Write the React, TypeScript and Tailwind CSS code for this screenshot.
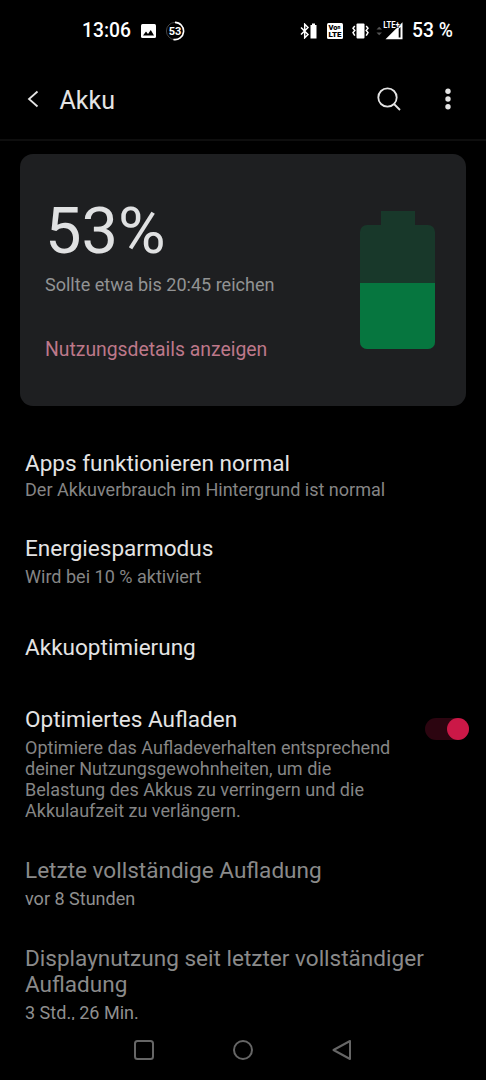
import { ReactNode } from "react";

type SettingProps = {
  title: string;
  text?: string;
  muted?: boolean;
  className?: string;
  textClassName?: string;
  children?: ReactNode;
};

function Setting({ title, text, muted, className, textClassName, children }: SettingProps) {
  return (
    <div className={`flex justify-between ${className ?? ""}`}>
      <div className="w-[402px]">
        <h2
          className={`text-[22.55px] leading-[26.3px] ${
            muted ? "text-[#8a8a8a]" : "text-[#e4e4e4]"
          }`}
        >
          {title}
        </h2>
        {text && (
          <p
            className={`w-[375px] text-[18.05px] leading-[21.2px] ${
              textClassName ?? "mt-[4px] mb-[0.5px]"
            } ${muted ? "text-[#8f8f8f]" : "text-[#858585]"}`}
          >
            {text}
          </p>
        )}
      </div>
      {children}
    </div>
  );
}

function StatusBar() {
  return (
    <div className="flex h-[62px] items-center pl-[82px] pr-[34px] text-white">
      <span className="w-[59px] text-[19.3px] font-medium leading-none">13:06</span>
      <svg className="h-[14px] w-[15px]" viewBox="0 0 15 14">
        <rect width="15" height="14" rx="1.5" fill="#fff" />
        <path d="M2 11.5 5 7.5l2 2.5 2.8-4 3.2 5.5z" fill="#000" />
      </svg>
      <svg className="ml-[9px] h-5 w-5" viewBox="0 0 20 20">
        <circle cx="10" cy="10" r="8.6" fill="none" stroke="#444" strokeWidth="1" />
        <path d="M10 1.4a8.6 8.6 0 1 1-1.6 17.05" fill="none" stroke="#fff" strokeWidth="1.6" />
        <text x="10" y="13.9" textAnchor="middle" fontSize="11" fontWeight="700" fill="#fff">
          53
        </text>
      </svg>

      {/* bluetooth with device battery */}
      <svg className="ml-auto h-4 w-[17px]" viewBox="0 0 17 16">
        <path d="M1 4.5l7 7L4.7 14.8V1.2L8 4.5l-7 7" fill="none" stroke="#fff" strokeWidth="1.5" />
        <path d="M12 .5h3V2h1.5v13.5h-6V2H12z" fill="#fff" />
      </svg>
      <svg className="ml-[10px] h-4 w-4" viewBox="0 0 16 16">
        <rect width="16" height="16" rx="1.5" fill="#fff" />
        <text x="1.5" y="7.3" fontSize="7.5" fontWeight="900" fill="#000">
          Vo<tspan dy="-1.5" fontSize="5">n</tspan>
        </text>
        <text x="1.5" y="14.4" textLength="13" lengthAdjust="spacingAndGlyphs" fontSize="8" fontWeight="900" fill="#000">
          LTE
        </text>
      </svg>
      <svg className="ml-[9px] h-4 w-[17px]" viewBox="0 0 17 16">
        <rect x="4.5" y=".5" width="8" height="15" rx="1" fill="#fff" />
        <path d="M2.8 3 1 5.2l1.8 2.2L1 9.6l1.8 3M14.2 3 16 5.2l-1.8 2.2L16 9.6l-1.8 3" fill="none" stroke="#fff" strokeWidth="1.5" />
      </svg>
      <svg className="ml-[7px] h-[18px] w-[27px] overflow-visible" viewBox="0 0 27 18">
        <path d="M.5 7.5 3.2 4.7 6 7.5zM.5 10.5 3.2 13.3 6 10.5z" fill="#555" />
        <path d="M9.5 17.2 26.5.2v17z" fill="#fff" />
        <path d="M24.5 5v10.5h-1.8V6.8z" fill="#000" />
        <text x="7.2" y="6.3" fontSize="8.8" fontWeight="700" fill="#fff" stroke="#000" strokeWidth="1.4" paintOrder="stroke" textLength="16.5" lengthAdjust="spacingAndGlyphs">
          LTE+
        </text>
      </svg>
      <span className="ml-[9px] w-[40px] whitespace-nowrap text-[19.3px] font-medium leading-none">53 %</span>
    </div>
  );
}

function Header() {
  return (
    <header className="flex h-[79px] items-center border-b-2 border-[#0e0e0e] pb-[3px] pl-[27px] pr-[35.5px] text-[#e4e4e4]">
      <svg className="h-[18px] w-3" viewBox="0 0 12 18" fill="none" stroke="currentColor" strokeWidth="1.8">
        <path d="M10.5 1.5 2 9l8.5 7.5" />
      </svg>
      <h1 className="ml-[20.5px] mt-[2px] text-[25px] leading-none">Akku</h1>
      <svg className="ml-auto h-6 w-6" viewBox="0 0 24 24" fill="none" stroke="currentColor" strokeWidth="1.8">
        <circle cx="10.5" cy="10.5" r="9.2" />
        <path d="m17 17 6 6" />
      </svg>
      <svg className="ml-[43.5px] h-[22px] w-[6px]" viewBox="0 0 6 22" fill="currentColor">
        <circle cx="3" cy="3.2" r="2.7" />
        <circle cx="3" cy="11" r="2.7" />
        <circle cx="3" cy="18.8" r="2.7" />
      </svg>
    </header>
  );
}

function BatteryCard() {
  return (
    <section className="mx-5 mt-[13px] flex h-[252px] justify-between rounded-[13px] bg-[#1e1f21] pl-[25px] pr-[31px]">
      <div>
        <p className="mt-[39px] text-[65px] leading-[76px] text-[#e0e1e2]">53%</p>
        <p className="mt-[5px] text-[18.05px] leading-[21px] text-[#929394]">
          Sollte etwa bis 20:45 reichen
        </p>
        <a className="mt-[43px] block text-[19.35px] leading-[24px] text-[#bd788a]">
          Nutzungsdetails anzeigen
        </a>
      </div>
      <div className="mt-[57px] flex w-[75px] flex-col items-center">
        <div className="h-[14px] w-[34px] bg-[#18382a]" />
        <div className="flex h-[124px] w-full flex-col justify-end overflow-hidden rounded-[7px] bg-[#18382a]">
          <div className="h-[66px] bg-[#06763f]" />
        </div>
      </div>
    </section>
  );
}

export default function App() {
  return (
    <div className="flex h-[1080px] w-[486px] flex-col overflow-hidden bg-black font-['Roboto',sans-serif]">
      <StatusBar />
      <Header />
      <main className="min-h-0 flex-1 overflow-hidden">
        <BatteryCard />
        <div className="pl-[25px] pr-[17px] pt-[44.6px]">
          <Setting
            title="Apps funktionieren normal"
            text="Der Akkuverbrauch im Hintergrund ist normal"
            textClassName="mt-[2.5px] mb-[2px]"
          />
          <Setting
            className="mt-[33px]"
            title="Energiesparmodus"
            text="Wird bei 10 % aktiviert"
          />
          <Setting className="mt-[47px]" title="Akkuoptimierung" />
          <Setting
            className="mt-[46px]"
            title="Optimiertes Aufladen"
            text="Optimiere das Aufladeverhalten entsprechend deiner Nutzungsgewohnheiten, um die Belastung des Akkus zu verringern und die Akkulaufzeit zu verlängern."
            textClassName="mt-[3.6px] mb-[0.6px]"
          >
            <button className="mt-[11.5px] flex h-[22px] w-[44px] shrink-0 justify-end rounded-full bg-[#2c0510]">
              <span className="size-[22px] rounded-full bg-[#cb1847]" />
            </button>
          </Setting>
          <Setting
            className="mt-[35.6px]"
            muted
            title="Letzte vollständige Aufladung"
            text="vor 8 Stunden"
            textClassName="mt-[4px]"
          />
          <Setting
            className="mt-[36.5px]"
            muted
            title="Displaynutzung seit letzter vollständiger Aufladung"
            text="3 Std., 26 Min."
            textClassName="mt-[3.4px]"
          />
        </div>
      </main>
      <nav className="flex h-[60px] shrink-0 items-center justify-between bg-black px-[134px]">
        <svg className="size-5" viewBox="0 0 20 20" fill="none" stroke="#666" strokeWidth="2">
          <rect x="1" y="1" width="18" height="18" rx="2.5" />
        </svg>
        <svg className="size-5" viewBox="0 0 20 20" fill="none" stroke="#666" strokeWidth="2">
          <circle cx="10" cy="10" r="9" />
        </svg>
        <svg className="size-5" viewBox="0 0 20 20" fill="none" stroke="#666" strokeWidth="2" strokeLinejoin="round">
          <path d="M18 1v18L1.5 10z" />
        </svg>
      </nav>
    </div>
  );
}
